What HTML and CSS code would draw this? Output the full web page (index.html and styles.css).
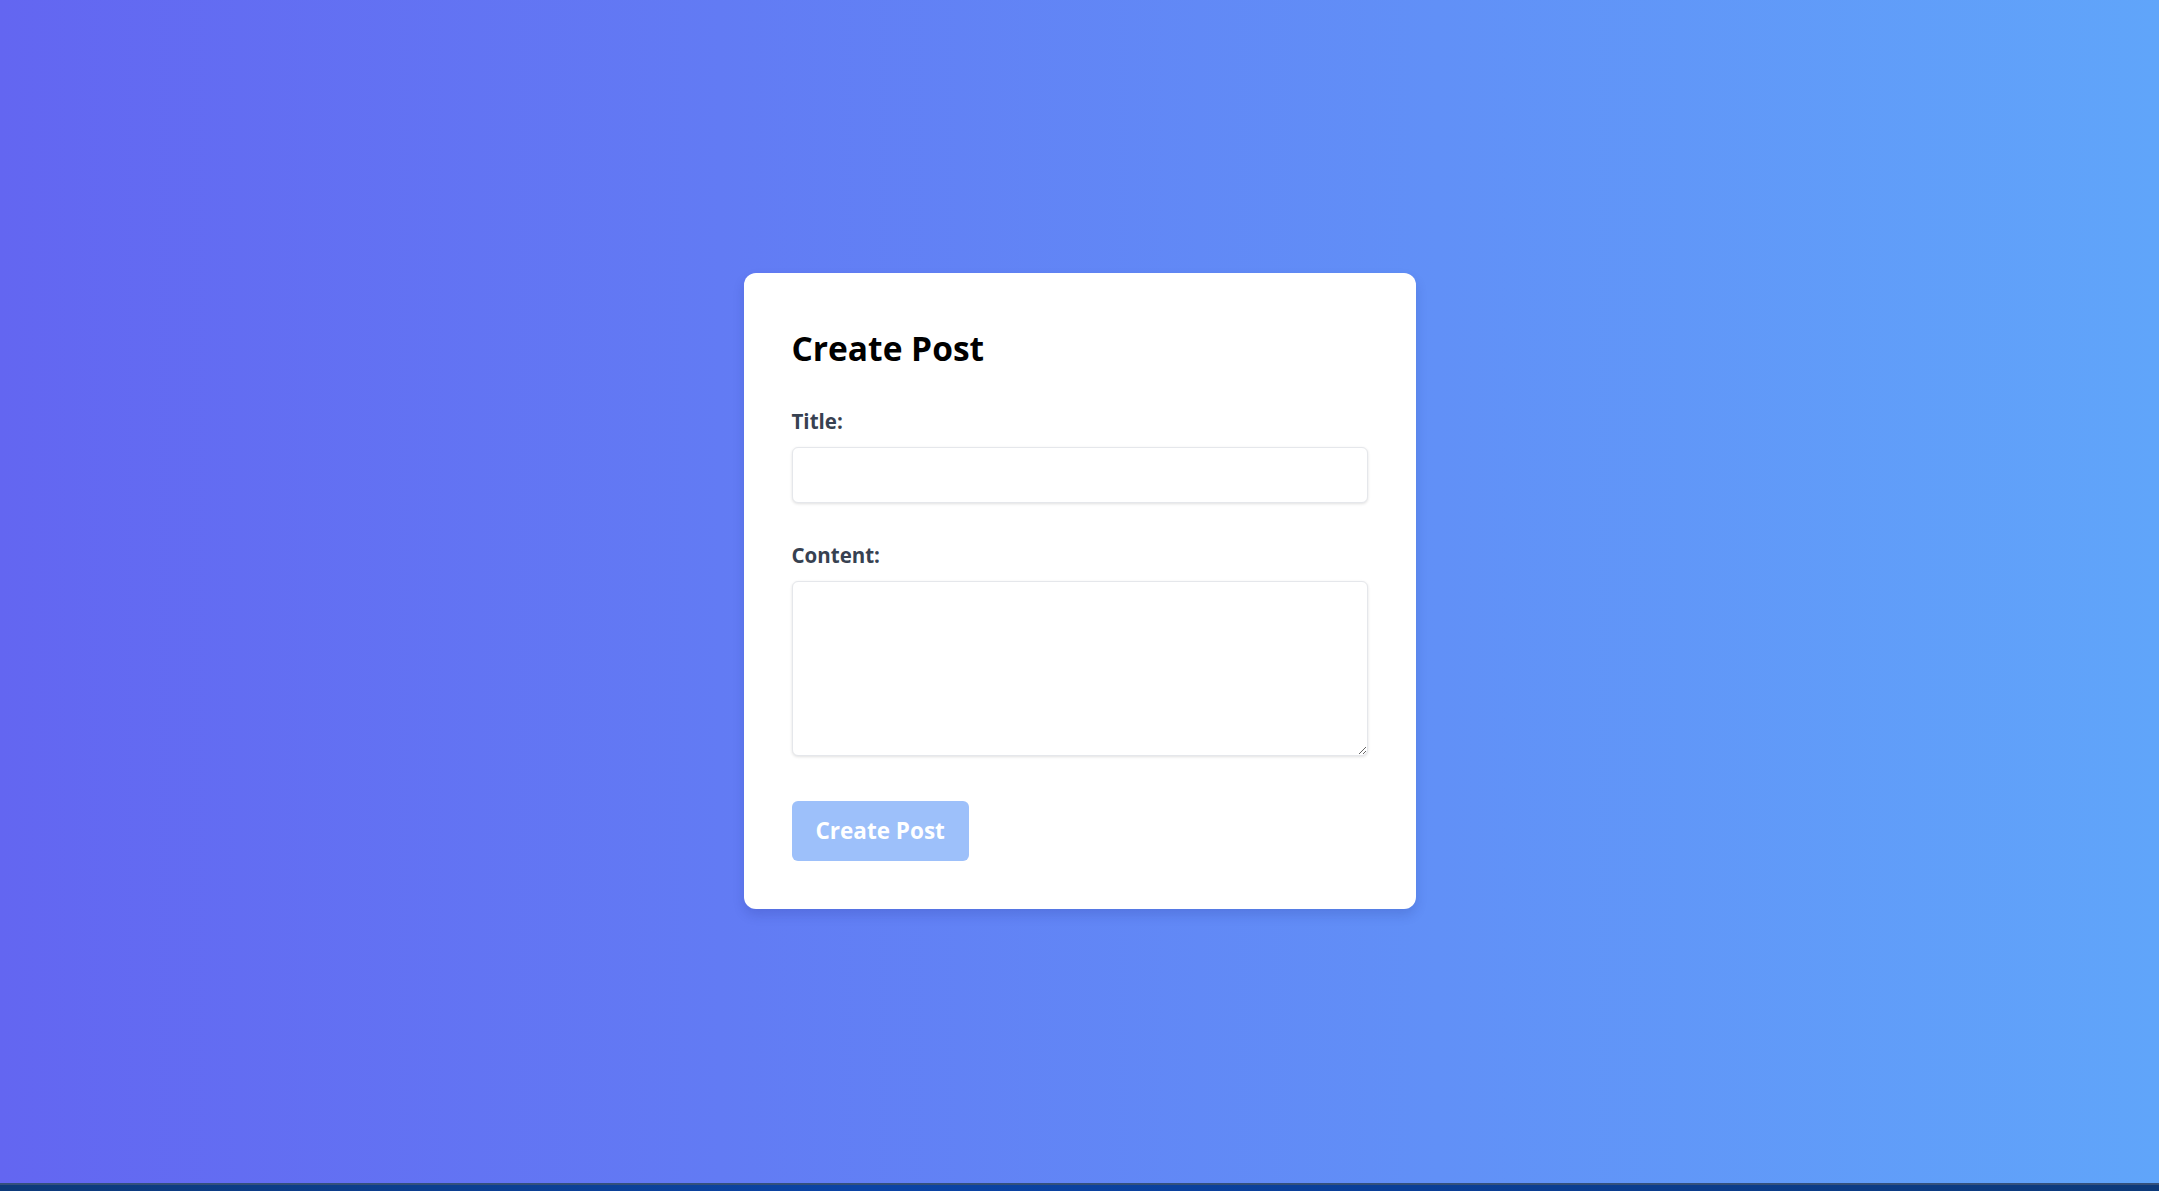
FILE: index.html
```html
<!DOCTYPE html>
<html lang="en">
<head>
<meta charset="utf-8">
<title>Create Post</title>
<link rel="stylesheet" href="styles.css">
</head>
<body>
  <main class="stage">
    <form class="card">
      <h2 class="card-title">Create Post</h2>
      <div class="group">
        <label class="label" for="title">Title:</label>
        <input class="field" id="title" type="text">
      </div>
      <div class="group">
        <label class="label" for="content">Content:</label>
        <textarea class="field area" id="content"></textarea>
      </div>
      <button class="submit" type="button" disabled>Create Post</button>
    </form>
  </main>
  <div class="taskbar"></div>
</body>
</html>
```

FILE: styles.css
```css
html, body {
  margin: 0;
  padding: 0;
  height: 100%;
}

body {
  display: flex;
  flex-direction: column;
  font-family: "Open Sans", "Noto Sans", sans-serif;
  background: linear-gradient(to right, #6366f1, #60a5fa);
}

.stage {
  flex: 1;
  display: flex;
  align-items: center;
  justify-content: center;
  padding-bottom: 1px;
}

.card {
  width: 672px;
  box-sizing: border-box;
  padding: 48px;
  background: #ffffff;
  border-radius: 12px;
  box-shadow: 0 6px 12px rgba(20, 30, 110, 0.16);
  display: flex;
  flex-direction: column;
}

.card-title {
  margin: 0 0 31px 0;
  font-size: 33.5px;
  line-height: 54px;
  font-weight: 700;
  color: #000000;
}

.group {
  display: flex;
  flex-direction: column;
  margin-bottom: 37px;
}

.label {
  font-size: 20.5px;
  line-height: 30px;
  font-weight: 700;
  color: #374151;
  margin-bottom: 11px;
}

.field {
  display: block;
  box-sizing: border-box;
  width: 100%;
  height: 56px;
  margin: 0;
  padding: 12px;
  border: 1px solid #e5e7eb;
  border-radius: 6px;
  background: #ffffff;
  box-shadow: 0 1px 3px rgba(0, 0, 0, 0.12);
  font-family: inherit;
  font-size: 20px;
  outline: none;
}

.area {
  height: 175px;
  resize: vertical;
}

.submit {
  align-self: flex-start;
  margin-top: 8px;
  height: 60px;
  padding: 0 24px;
  border: none;
  border-radius: 6px;
  background: #9dc0fa;
  color: #ffffff;
  font-family: inherit;
  font-size: 22.5px;
  font-weight: 700;
  line-height: 60px;
}

.taskbar {
  height: 8px;
  flex: none;
  box-sizing: border-box;
  border-top: 2px solid #33507c;
  background: linear-gradient(to right, #0d3a7a, #0b44a6 40%, #0a3f98 65%, #0d3a7a);
}
```
